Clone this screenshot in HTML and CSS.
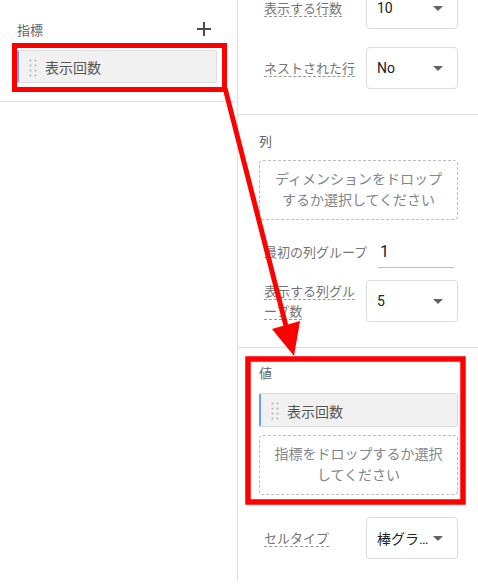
FILE: index.html
```html
<!DOCTYPE html>
<html lang="ja">
<head>
  <meta charset="UTF-8">
  <meta name="viewport" content="width=device-width, initial-scale=1.0">
  <title>表の設定</title>
  <link rel="stylesheet" href="styles.css">
</head>
<body>
  <div class="editor">
    <aside class="data-panel">
      <div class="panel-section">
        <div class="section-head">
          <span class="head-title">指標</span>
          <button class="add-btn" aria-label="指標を追加">
            <svg width="14" height="14" viewBox="0 0 14 14"><path d="M7 0v14M0 7h14" stroke="#4a4a4a" stroke-width="2"/></svg>
          </button>
        </div>
        <div class="chip">
          <svg class="drag" width="8" height="18" viewBox="0 0 8 18">
            <circle cx="1.5" cy="1.5" r="1.1"/><circle cx="6.5" cy="1.5" r="1.1"/>
            <circle cx="1.5" cy="6.5" r="1.1"/><circle cx="6.5" cy="6.5" r="1.1"/>
            <circle cx="1.5" cy="11.5" r="1.1"/><circle cx="6.5" cy="11.5" r="1.1"/>
            <circle cx="1.5" cy="16.5" r="1.1"/><circle cx="6.5" cy="16.5" r="1.1"/>
          </svg>
          <span>表示回数</span>
        </div>
      </div>
    </aside>

    <main class="setup-panel">
      <section class="setup-section rows-section">
        <div class="row">
          <span class="row-label"><span class="hint">表示する行数</span></span>
          <div class="select"><span class="value">10</span><span class="caret"></span></div>
        </div>
        <div class="row">
          <span class="row-label"><span class="hint">ネストされた行</span></span>
          <div class="select"><span class="value">No</span><span class="caret"></span></div>
        </div>
      </section>

      <section class="setup-section columns-section">
        <div class="section-title">列</div>
        <div class="drop-zone">ディメンションをドロップするか選択してください</div>
        <div class="row field-row">
          <span class="row-label">最初の列グループ</span>
          <div class="text-field">1</div>
        </div>
        <div class="row">
          <span class="row-label"><span class="hint">表示する列グループ数</span></span>
          <div class="select"><span class="value">5</span><span class="caret"></span></div>
        </div>
      </section>

      <section class="setup-section values-section">
        <div class="section-title">値</div>
        <div class="chip">
          <svg class="drag" width="8" height="18" viewBox="0 0 8 18">
            <circle cx="1.5" cy="1.5" r="1.1"/><circle cx="6.5" cy="1.5" r="1.1"/>
            <circle cx="1.5" cy="6.5" r="1.1"/><circle cx="6.5" cy="6.5" r="1.1"/>
            <circle cx="1.5" cy="11.5" r="1.1"/><circle cx="6.5" cy="11.5" r="1.1"/>
            <circle cx="1.5" cy="16.5" r="1.1"/><circle cx="6.5" cy="16.5" r="1.1"/>
          </svg>
          <span>表示回数</span>
        </div>
        <div class="drop-zone">指標をドロップするか選択してください</div>
      </section>

      <section class="setup-section cell-section">
        <div class="row">
          <span class="row-label"><span class="hint">セルタイプ</span></span>
          <div class="select"><span class="value">棒グラ…</span><span class="caret"></span></div>
        </div>
      </section>
    </main>

    <!-- 注釈（赤枠と矢印） -->
    <svg class="annotation" width="478" height="582" viewBox="0 0 478 582">
      <rect x="14.5" y="45.5" width="210" height="44" fill="none" stroke="#f00" stroke-width="5"/>
      <rect x="248" y="359" width="215" height="143" fill="none" stroke="#f00" stroke-width="5.5"/>
      <line x1="225" y1="88" x2="286" y2="326" stroke="#f00" stroke-width="5"/>
      <polygon points="294,356 272,329 300,321" fill="#f00"/>
    </svg>
  </div>
</body>
</html>
```

FILE: styles.css
```css
* {
  box-sizing: border-box;
}

body {
  margin: 0;
  background: #fff;
  font-family: Roboto, "Noto Sans CJK JP", sans-serif;
  color: #202124;
}

.editor {
  display: flex;
  height: 582px;
  overflow: hidden;
  position: relative;
}

/* 左：データ */
.data-panel {
  width: 238px;
  border-right: 1px solid #e0e0e0;
}

.panel-section {
  padding: 17px 20px 18px 17px;
  border-bottom: 1px solid #e0e0e0;
}

.section-head {
  display: flex;
  align-items: center;
  justify-content: space-between;
  height: 24px;
  margin-bottom: 9px;
}

.head-title {
  font-size: 13px;
  color: #5f6368;
}

.add-btn {
  width: 24px;
  height: 24px;
  padding: 0;
  border: none;
  background: none;
  display: flex;
  align-items: center;
  justify-content: center;
  margin-right: 1px;
}

.chip {
  display: flex;
  align-items: center;
  gap: 8px;
  height: 33px;
  padding-left: 10px;
  background: #f1f1f1;
  border: 1px solid #dadce0;
  border-left: 2px solid #6d9ef5;
  border-radius: 2px;
  font-size: 14px;
  color: #555;
}

.chip span {
  line-height: 20px;
  padding-top: 3px;
}

.drag {
  fill: #b4b7ba;
  margin-top: 2px;
}

/* 右：設定 */
.setup-panel {
  flex: 1;
}

.setup-section {
  padding: 0 20px 25px 21px;
  border-bottom: 1px solid #e0e0e0;
}

.rows-section {
  margin-top: -13px;
}

.row {
  display: flex;
  align-items: center;
  gap: 8px;
  padding-left: 5px;
}

.row + .row {
  margin-top: 18px;
}

.row-label {
  flex: 1;
  font-size: 13px;
  line-height: 20px;
  color: #757575;
  padding-top: 2px;
}

.hint {
  border-bottom: 1px dashed #999;
}

.select {
  width: 92px;
  height: 42px;
  display: flex;
  align-items: center;
  padding: 0 14px 0 10px;
  border: 1px solid #dadce0;
  border-radius: 4px;
  font-size: 14px;
  color: #202124;
}

.value {
  flex: 1;
  min-width: 0;
  white-space: nowrap;
  overflow: hidden;
  text-overflow: ellipsis;
}

.caret {
  width: 0;
  height: 0;
  margin-left: 2px;
  border-left: 5px solid transparent;
  border-right: 5px solid transparent;
  border-top: 5px solid #5f6368;
}

.section-title {
  font-size: 13px;
  line-height: 18px;
  color: #5f6368;
  margin-bottom: 9px;
}

.columns-section {
  padding-top: 18px;
}

.drop-zone {
  padding: 8px 12px;
  border: 1px dashed #bdbdbd;
  border-radius: 4px;
  font-size: 14px;
  line-height: 21px;
  color: #80868b;
  text-align: center;
}

.columns-section .drop-zone {
  margin-bottom: 16px;
}

.field-row + .row {
  margin-top: 12px;
}

.text-field {
  width: 76px;
  height: 32px;
  margin-right: 4px;
  padding: 6px 0 0 2px;
  border-bottom: 1px solid #bdbdbd;
  font-size: 16px;
  color: #202124;
}

.values-section {
  padding-top: 17px;
  padding-bottom: 0;
  border-bottom: none;
}

.values-section .section-title {
  margin-bottom: 10px;
}

.values-section .chip {
  height: 34px;
  margin-bottom: 8px;
}

.cell-section {
  padding-top: 22px;
  border-bottom: none;
}

.annotation {
  position: absolute;
  top: 0;
  left: 0;
  pointer-events: none;
}
```
